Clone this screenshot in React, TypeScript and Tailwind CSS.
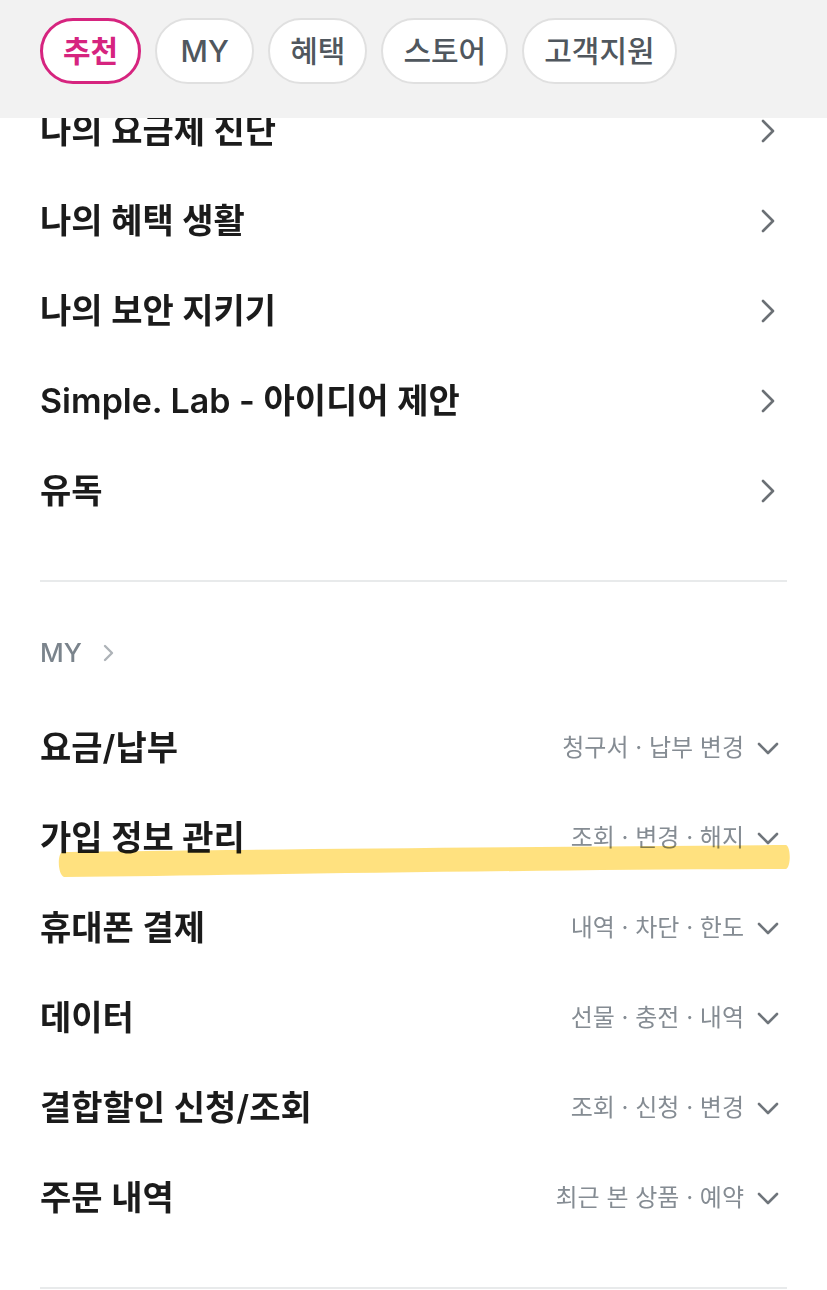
import React from "react";

const font = { fontFamily: 'Inter, "Noto Sans CJK KR", "Noto Sans", sans-serif' };

function ChevronRight() {
  return (
    <svg width="24" height="28" viewBox="0 0 24 28" className="shrink-0">
      <path d="M7 4 L17 14 L7 24" fill="none" stroke="#6b7075" strokeWidth="2.6" strokeLinecap="round" strokeLinejoin="round" />
    </svg>
  );
}

function ChevronDown() {
  return (
    <svg width="24" height="24" viewBox="0 0 24 24" className="shrink-0">
      <path d="M3 8 L12 17 L21 8" fill="none" stroke="#6f757b" strokeWidth="2.6" strokeLinecap="round" strokeLinejoin="round" />
    </svg>
  );
}

const topItems = ["나의 요금제 진단", "나의 혜택 생활", "나의 보안 지키기", "Simple. Lab - 아이디어 제안", "유독"];

const myItems: [string, string][] = [
  ["요금/납부", "청구서 · 납부 변경"],
  ["가입 정보 관리", "조회 · 변경 · 해지"],
  ["휴대폰 결제", "내역 · 차단 · 한도"],
  ["데이터", "선물 · 충전 · 내역"],
  ["결합할인 신청/조회", "조회 · 신청 · 변경"],
  ["주문 내역", "최근 본 상품 · 예약"],
];

const tabs = ["추천", "MY", "혜택", "스토어", "고객지원"];

export default function App() {
  return (
    <div className="relative w-[827px] h-[1290px] overflow-hidden bg-white" style={font}>
      {/* sticky header overlaying scrolled content */}
      <div className="absolute top-0 left-0 right-0 z-10 h-[118px] bg-[#f2f2f2] flex items-start pt-[18px] pl-[40px] gap-[14px]">
        {tabs.map((t, i) =>
          i === 0 ? (
            <div
              key={t}
              className="h-[66px] min-w-[101px] px-[20px] rounded-full border-[3px] border-[#d6247f] bg-white flex items-center justify-center text-[30px] font-semibold text-[#d6247f] leading-none"
            >
              {t}
            </div>
          ) : (
            <div
              key={t}
              className="h-[66px] min-w-[99px] px-[20px] rounded-full border-[2px] border-[#e0e0e0] bg-white flex items-center justify-center text-[30px] font-medium text-[#50575e] leading-none"
            >
              {t}
            </div>
          )
        )}
      </div>

      <div className="pt-[86px] px-[40px]">
        {topItems.map((t) => (
          <div key={t} className="h-[90px] flex items-center justify-between pr-[7px]">
            <span className="text-[34px] font-semibold text-[#1b1b1b] leading-none">{t}</span>
            <ChevronRight />
          </div>
        ))}

        <div className="mt-[44px] h-[2px] bg-[#e8eaeb]" />

        <div className="h-[121px] pt-[20px] flex items-center">
          <span className="text-[26px] font-medium text-[#7b848c] leading-none">MY</span>
          <svg width="20" height="24" viewBox="0 0 20 24" className="ml-[17px]">
            <path d="M6 5 L13 12 L6 19" fill="none" stroke="#aeb3b8" strokeWidth="2.4" strokeLinecap="round" strokeLinejoin="round" />
          </svg>
        </div>

        {myItems.map(([t, s]) => (
          <div key={t} className="h-[90px] flex items-center justify-between pr-[7px]">
            <span className="text-[34px] font-semibold text-[#1b1b1b] leading-none">{t}</span>
            <div className="flex items-center gap-[12px]">
              <span className="text-[24px] text-[#858c93] leading-none">{s}</span>
              <ChevronDown />
            </div>
          </div>
        ))}

        <div className="mt-[44px] h-[2px] bg-[#e8eaeb]" />
      </div>

      {/* highlighter annotation */}
      <svg className="absolute left-0 top-0 pointer-events-none mix-blend-multiply" width="827" height="1290" viewBox="0 0 827 1290">
        <path
          d="M62 852 C200 850 500 847 786 845 C791 847 791 867 786 869 C500 870 250 875 64 877 C58 875 57 855 62 852 Z"
          fill="#ffdf78"
          opacity="0.95"
        />
      </svg>
    </div>
  );
}
